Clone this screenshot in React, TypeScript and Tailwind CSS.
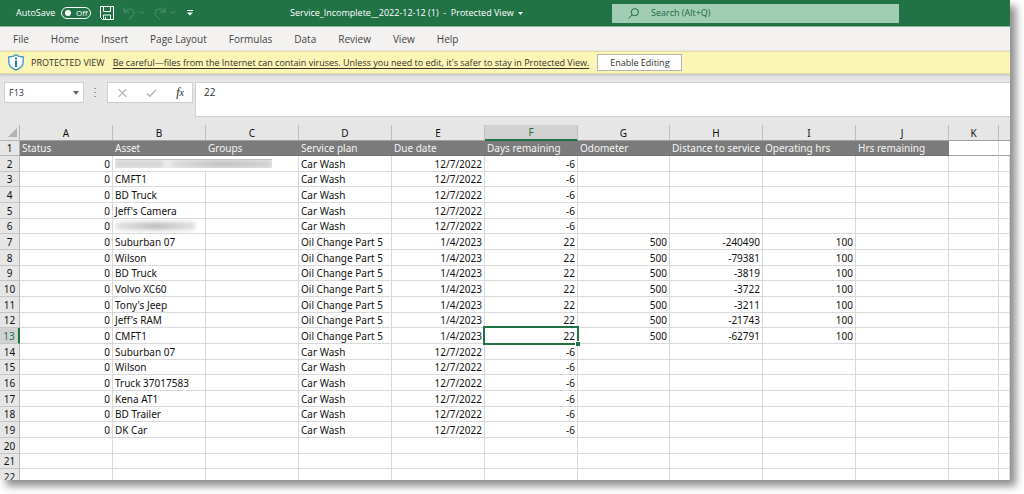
import React from 'react';
import { clsx } from 'clsx';

const menuItems = ['File', 'Home', 'Insert', 'Page Layout', 'Formulas', 'Data', 'Review', 'View', 'Help'];

const columns = ['A', 'B', 'C', 'D', 'E', 'F', 'G', 'H', 'I', 'J', 'K'];

const headers = [
  'Status',
  'Asset',
  'Groups',
  'Service plan',
  'Due date',
  'Days remaining',
  'Odometer',
  'Distance to service',
  'Operating hrs',
  'Hrs remaining',
];

type Service = { asset: string; hidden?: 'long' | 'short'; distance?: string };

const services: Service[] = [
  { asset: '', hidden: 'long' },
  { asset: 'CMFT1' },
  { asset: 'BD Truck' },
  { asset: "Jeff's Camera" },
  { asset: '', hidden: 'short' },
  { asset: 'Suburban 07', distance: '-240490' },
  { asset: 'Wilson', distance: '-79381' },
  { asset: 'BD Truck', distance: '-3819' },
  { asset: 'Volvo XC60', distance: '-3722' },
  { asset: "Tony's Jeep", distance: '-3211' },
  { asset: "Jeff's RAM", distance: '-21743' },
  { asset: 'CMFT1', distance: '-62791' },
  { asset: 'Suburban 07' },
  { asset: 'Wilson' },
  { asset: 'Truck 37017583' },
  { asset: 'Kena AT1' },
  { asset: 'BD Trailer' },
  { asset: 'DK Car' },
];

const SELECTED_ROW = 13;

function TitleBar() {
  return (
    <header className="flex h-[27px] shrink-0 items-center border-b border-[#8db69d] bg-[#217346] pl-4 text-[9px] text-white">
      <label htmlFor="autosave" className="w-10">AutoSave</label>
      <span className="relative ml-[5px] flex h-3 w-[30px] items-center rounded-full border border-white">
        <input id="autosave" type="checkbox" role="switch" className="absolute inset-0 m-0 appearance-none rounded-full" />
        <span className="ml-[3px] h-1.5 w-1.5 rounded-full bg-white" />
        <span className="ml-[5px] text-[8px] leading-[10px]">Off</span>
      </span>
      <button aria-label="Save" className="ml-[9px]">
        <svg width="14" height="14" viewBox="0 0 14 14" fill="none" stroke="white">
          <path d="M.5.5h13v13H2.500l-2-2zM3.500 .5v5h7V.5M3.500 13.500v-4.500h7v4.500M5.500 13.500v-2.500" />
        </svg>
      </button>
      <button aria-label="Undo" className="ml-[9px] flex items-center gap-1">
        <svg width="12" height="13" viewBox="0 0 12 13" fill="none" stroke="#4f9470">
          <path d="M1 .5v4.500h5M1.200 4.800C3 2.500 6 1.500 8.500 2.500c3 1.300 3 4.500 1 6.500L6 12.500" />
        </svg>
        <svg width="6" height="4" viewBox="0 0 6 4" fill="none" stroke="#4f9470"><path d="M1 .5l2 2 2-2" /></svg>
      </button>
      <button aria-label="Redo" className="ml-[9px] flex items-center gap-1">
        <svg width="12" height="13" viewBox="0 0 12 13" fill="none" stroke="#4f9470">
          <path d="M11 .5v4.500H6M10.800 4.800C9 2.500 6 1.500 3.500 2.500c-3 1.300-3 4.500-1 6.500L6 12.500" />
        </svg>
        <svg width="6" height="4" viewBox="0 0 6 4" fill="none" stroke="#4f9470"><path d="M1 .5l2 2 2-2" /></svg>
      </button>
      <button aria-label="Customize toolbar" className="ml-[11px]">
        <svg width="6" height="6" viewBox="0 0 6 6" fill="white"><path d="M0 0h6v1H0zM0 2.500h6L3 5.500z" /></svg>
      </button>
      <button className="ml-[97px] flex items-center gap-1 whitespace-pre">
        <span>Service_Incomplete__2022-12-12 (1)  -  Protected View</span>
        <svg width="5" height="3" viewBox="0 0 5 3" fill="white"><path d="M0 0h5L2.500 3z" /></svg>
      </button>
      <div className="ml-auto mr-[111px] flex h-[19px] w-[287px] items-center bg-[#a0cdb3] pl-4 text-[#1d6b40]">
        <svg width="11" height="11" viewBox="0 0 11 11" fill="none" stroke="currentColor">
          <circle cx="6.800" cy="4.200" r="3.600" />
          <path d="M4.200 6.800L.5 10.500" />
        </svg>
        <input
          aria-label="Search"
          placeholder="Search (Alt+Q)"
          className="ml-3 min-w-0 flex-1 bg-transparent outline-none placeholder:text-[#1d6b40]"
        />
      </div>
    </header>
  );
}

function ProtectedBanner() {
  return (
    <div className="flex h-[23px] shrink-0 items-center border-y border-[#e3dc9e] bg-[#fcf6b6] pl-2 text-[9px] text-[#33322b] shadow-[0_1px_3px_#bbbbbb]">
      <svg width="16" height="17" viewBox="0 0 16 17" fill="none">
        <path d="M8 .8C6 2.600 3.500 3 .8 3v5c0 4 3 6.500 7.200 8.200C12.200 14.500 15.200 12 15.200 8V3C12.500 3 10 2.600 8 .8z" fill="#fff" stroke="#3a96cf" strokeWidth="1.300" />
        <path d="M7 3.500h2v2H7zM7 6.500h2V13H7z" fill="#1e7fc2" />
      </svg>
      <span className="ml-[7px]">PROTECTED VIEW</span>
      <a href="#protected" className="ml-2 underline underline-offset-2">
        Be careful—files from the Internet can contain viruses. Unless you need to edit, it's safer to stay in Protected View.
      </a>
      <button className="ml-2 h-[17px] w-[85px] border border-[#b5b5b5] bg-white">Enable Editing</button>
    </div>
  );
}

function FormulaBar() {
  return (
    <div className="flex shrink-0 items-start pb-2 pl-1 pt-2">
      <div className="flex h-[21px] w-20 items-center border border-[#cfcfcf] bg-white pl-1 pr-1">
        <input aria-label="Name box" defaultValue="F13" className="min-w-0 flex-1 bg-transparent text-[9px] outline-none" />
        <svg width="6" height="4" viewBox="0 0 6 4" fill="#666"><path d="M0 0h6L3 4z" /></svg>
      </div>
      <svg className="mt-1.5 ml-[10px]" width="2" height="10" viewBox="0 0 2 10" fill="#999">
        <path d="M0 0h2v1H0zM0 4h2v1H0zM0 8h2v1H0z" />
      </svg>
      <div className="ml-[11px] flex h-[21px] w-[86px] items-center justify-between border border-[#cfcfcf] bg-white pl-[10px] pr-2">
        <button aria-label="Cancel">
          <svg width="9" height="8" viewBox="0 0 9 8" stroke="#b8b8b8" strokeWidth="1.300"><path d="M.5 0l8 8M8.500 0l-8 8" /></svg>
        </button>
        <button aria-label="Enter">
          <svg width="11" height="8" viewBox="0 0 11 8" fill="none" stroke="#b8b8b8" strokeWidth="1.600"><path d="M.8 4.500l3 2.700L10.200.7" /></svg>
        </button>
        <button className="font-['Liberation_Serif',serif] text-[12px] italic leading-3 text-[#222]">
          f<span className="text-[10px]">x</span>
        </button>
      </div>
      <textarea
        aria-label="Formula"
        defaultValue="22"
        className="ml-[2px] h-[35px] min-w-0 flex-1 resize-none border border-r-0 border-[#cfcfcf] bg-white px-2 pt-[2px] text-[10px] leading-[14px] outline-none"
      />
    </div>
  );
}

// Smudged name of an asset that should stay private
function Redacted({ size }: { size: 'long' | 'short' }) {
  if (size === 'short') {
    return <div className="h-2 w-20 bg-gradient-to-r from-[#e4e4e4] via-[#bdbdbd] to-[#e0e0e0] blur-[2px]" />;
  }
  return (
    <div className="absolute inset-y-0 left-0 z-10 w-[159px] bg-white pl-[2px] pt-[3px]">
      <div className="flex h-[9px] gap-2 overflow-hidden border-t border-[#c4c4c4] bg-[#eeeeee]">
        <div className="w-12 bg-[#d6d6d6] blur-[2px]" />
        <div className="flex-1 bg-gradient-to-r from-[#dddddd] via-[#c2c2c2] to-[#d2d2d2] blur-[2px]" />
      </div>
    </div>
  );
}

function Sheet() {
  const cell = 'border-b border-r border-[#d9d9d9] px-[2px] whitespace-nowrap';

  return (
    <table className="w-full table-fixed border-separate border-spacing-0 text-[10px] leading-[14px] text-[#111]">
      <colgroup>
        <col className="w-5" />
        {columns.map((column) => (
          <col key={column} className={column === 'K' ? 'w-[50px]' : column === 'G' ? 'w-[92px]' : 'w-[93px]'} />
        ))}
        <col />
      </colgroup>
      <thead>
        <tr className="h-4 bg-[#e6e6e6]">
          <th className="border-b border-r border-[#b5b5b5] p-0">
            <svg className="ml-auto mr-[2px]" width="9" height="9" viewBox="0 0 9 9" fill="#b2b2b2"><path d="M9 0v9H0z" /></svg>
          </th>
          {columns.map((column) => (
            <th
              key={column}
              className={clsx(
                'border-r p-0 font-normal',
                column === 'F'
                  ? 'border-b-2 border-b-[#217346] border-r-[#bdbdbd] bg-[#d2d2d2] text-[#217346] leading-[13px]'
                  : 'border-b border-b-[#9f9f9f] border-r-[#bdbdbd]',
              )}
            >
              {column}
            </th>
          ))}
          <th className="border-b border-[#9f9f9f] p-0" />
        </tr>
      </thead>
      <tbody>
        <tr className="h-[15px]">
          <th className="border-b border-r border-[#b5b5b5] bg-[#e6e6e6] p-0 font-normal">1</th>
          {headers.map((header) => (
            <th key={header} className="whitespace-nowrap border-b border-[#6e6e6e] bg-[#7b7b7b] p-0 pl-[2px] text-left font-normal text-[#f4f4f4]">
              {header}
            </th>
          ))}
          <td className="border-b border-r border-b-[#9f9f9f] border-r-[#d9d9d9]" />
          <td className="border-b border-[#9f9f9f]" />
        </tr>
        {Array.from({ length: 21 }, (_, i) => {
          const row = i + 2;
          const service = services[i];
          const oil = service?.distance !== undefined;
          const selected = row === SELECTED_ROW;
          const values = service
            ? ['0', service.asset, '', oil ? 'Oil Change Part 5' : 'Car Wash', oil ? '1/4/2023' : '12/7/2022', oil ? '22' : '-6', oil ? '500' : '', service.distance ?? '', oil ? '100' : '', '', '', '']
            : Array(12).fill('');

          return (
            <tr key={row} className="h-4 nth-[3n]:h-[15px]">
              <th
                className={clsx(
                  'border-b border-b-[#c6c6c6] p-0 font-normal leading-[14px]',
                  selected ? 'border-r-2 border-r-[#217346] bg-[#d2d2d2] text-[#217346]' : 'border-r border-r-[#b5b5b5] bg-[#e6e6e6]',
                )}
              >
                {row}
              </th>
              {values.map((value, c) => (
                <td key={c} className={clsx(cell, 'relative py-0', (c === 0 || c > 3) && 'text-right')}>
                  {c === 1 && service?.hidden ? <Redacted size={service.hidden} /> : value}
                  {selected && c === 5 && (
                    <div className="absolute -bottom-[2px] -left-[2px] -right-[2px] -top-[2px] z-10 border-2 border-[#217346]">
                      <span className="absolute -bottom-[3px] -right-[3px] h-[5px] w-[5px] border-l border-t border-white bg-[#217346]" />
                    </div>
                  )}
                </td>
              ))}
            </tr>
          );
        })}
      </tbody>
    </table>
  );
}

export default function App() {
  return (
    <div className="h-screen overflow-hidden bg-white pb-[14px] pr-[14px] font-['Open_Sans','Noto_Sans',sans-serif]">
      <div className="h-full shadow-[6px_6px_8px_rgba(0,0,0,0.45)]">
        <div className="flex h-full flex-col overflow-hidden bg-[#e6e6e6] text-[#333]">
          <TitleBar />
          <nav className="flex h-6 shrink-0 items-center gap-[22px] bg-[#f3f2f1] pl-[13px] text-[10px] text-[#444]">
            {menuItems.map((item) => (
              <button key={item}>{item}</button>
            ))}
          </nav>
          <ProtectedBanner />
          <FormulaBar />
          <main className="min-h-0 flex-1 overflow-hidden bg-white font-['Noto_Sans','Open_Sans',sans-serif]">
            <Sheet />
          </main>
        </div>
      </div>
    </div>
  );
}
